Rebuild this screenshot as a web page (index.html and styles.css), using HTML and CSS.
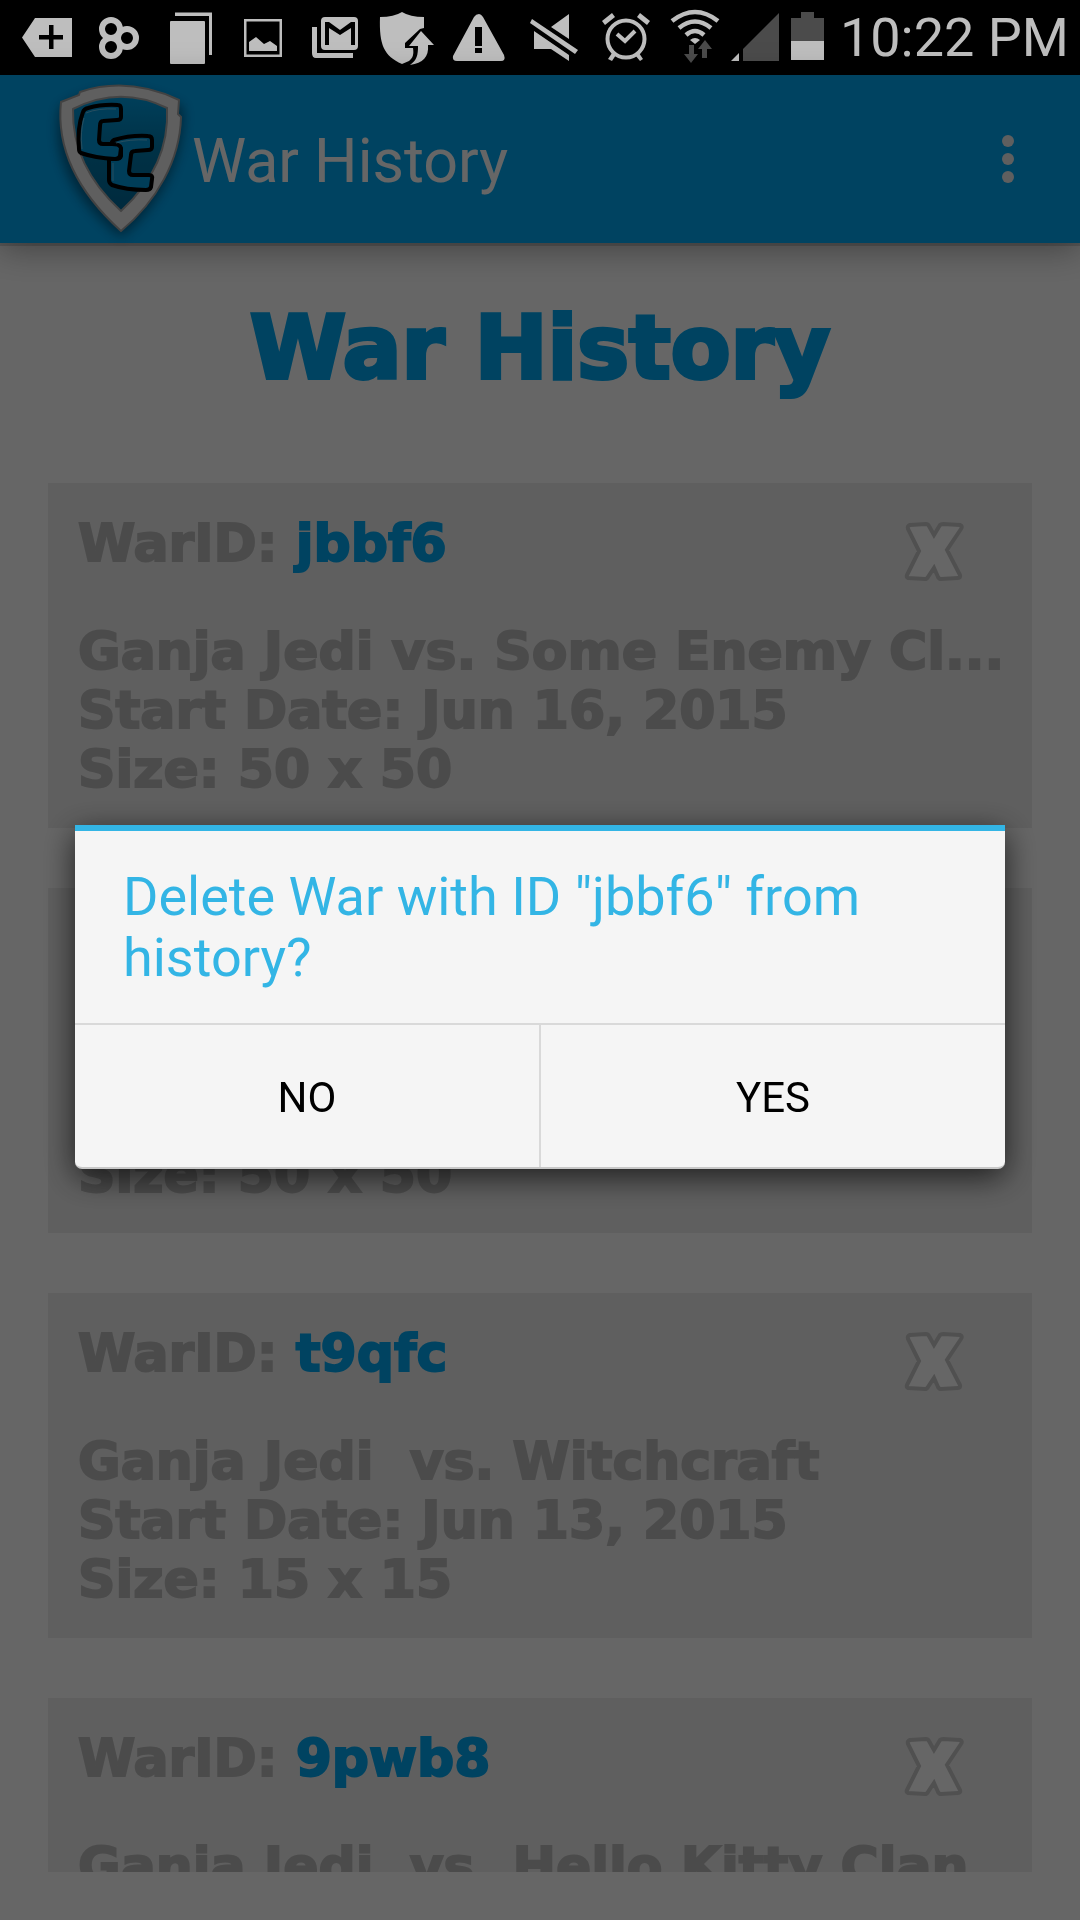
FILE: index.html
```html
<!DOCTYPE html>
<html lang="en">
<head>
<meta charset="utf-8">
<meta name="viewport" content="width=device-width, initial-scale=1">
<title>War History</title>
<link rel="stylesheet" href="styles.css">
</head>
<body>
<div class="statusbar">
  <svg class="status-icons" width="834" height="75" viewBox="0 0 834 75" aria-hidden="true">
    <g fill="#bebebe">
      <path fill-rule="evenodd" d="M22 37.500 35 18H72V57H35ZM49 25V35H39V39.500H49V49H53.500V39.500H63V35H53.500V25Z"/>
      <g fill="none" stroke="#bebebe" stroke-width="6"><circle cx="111" cy="29" r="9"/><circle cx="127" cy="38" r="9"/><circle cx="111" cy="47" r="9"/></g>
      <rect x="170" y="21" width="35" height="43" rx="1"/><path d="M175 12.500H212V55H209V16H175Z"/>
      <path fill-rule="evenodd" d="M244 19H282V57H244ZM246.500 21.500V54.500H279.500V21.500Z"/><path d="M249 51V42L256 37 264 44 270 41 277 46V51Z"/>
      <path fill-rule="evenodd" d="M325 17H354Q358 17 358 21V46Q358 50 354 50H325Q321 50 321 46V21Q321 17 325 17ZM325 22V45H329V28L340 35 351 28V45H355V22H351L340 30 329 22Z"/>
      <path d="M312 27H317V53H353V58H316Q312 58 312 53Z"/>
      <path d="M402 12Q410 17 424 17V28L420 29 405 43V48H413C414 54 413 58 409 61L402 64C384 56 379 45 380 17Q394 17 402 12Z"/>
      <path d="M421 31 434 45H428C429 57 423 63 410 65C417 60 418 55 418 46H409Z"/>
      <path fill-rule="evenodd" d="M479 14Q481 14 483 17L504 55Q506 61 501 61H457Q452 61 453 56L474 17Q476 14 479 14ZM475 27V46H482V27ZM475 48V53H482V48Z"/>
      <path d="M569 14V39L551 27ZM534 31 569 55V61L551 49H534Z"/><path d="M532 19 578 50 575 54 530 23Z"/>
      <circle cx="626" cy="39" r="18.500" fill="none" stroke="#bebebe" stroke-width="4"/>
      <path d="M602 21 612 13 615 17 605 25ZM650 21 640 13 637 17 647 25ZM612 53 608 59 612 61 616 55ZM639 53 643 59 640 61 635 55Z"/>
      <path d="M617 34 625 41 635 31" fill="none" stroke="#bebebe" stroke-width="4"/>
      <g fill="none" stroke="#bebebe" stroke-width="4.500"><path d="M672 21Q695 3 718 21"/><path d="M679 28Q695 15 711 28"/><path d="M686 35Q695 27 704 35"/></g><path d="M690 40Q695 36 700 40L695 44Z"/>
      <path d="M731 61 739 53V61Z"/><rect x="791" y="41" width="33" height="19"/>
    </g>
    <g fill="#4b4b4b"><path d="M689 45H694V54H698L691 63 684 54H689ZM702 58H707V49H712L705 40 698 49H702Z"/><path d="M743 61V49L779 13V61Z"/><path d="M801 12H814V18H824V41H791V18H801Z"/></g>
  </svg>
  <time class="clock">10:22 PM</time>
</div>

<header class="appbar">
  <svg class="logo" width="130" height="168" viewBox="0 0 130 168" aria-hidden="true">
    <defs>
      <linearGradient id="inner" x1="0" y1="0" x2="0" y2="1"><stop offset="0" stop-color="#009ee2"/><stop offset=".45" stop-color="#007caf"/><stop offset="1" stop-color="#00699a"/></linearGradient>
      <filter id="soft" x="-30%" y="-30%" width="160%" height="160%"><feGaussianBlur stdDeviation="6"/></filter>
    </defs>
    <path d="M8 32Q65-2 131 32C134 72 116 124 69 162 20 124-2 80 8 32Z" fill="#00283c" opacity=".55" filter="url(#soft)"/>
    <path d="M9 27 27 20 28 17Q76 1 127 25L126 39 129 42C128 85 105 126 69 156 26 117 4 75 9 27Z" fill="#eee" stroke="#a6a6a6" stroke-width="2"/>
    <path d="M21 34Q68 10 115 33C117 70 104 104 69 136 35 105 20 72 21 34Z" fill="url(#inner)" stroke="#aaa" stroke-width="2"/>
    <g fill="#0098dc" stroke="#000" stroke-width="4" stroke-linejoin="round">
      <path d="M36 33Q50 29 66 30 69 30 69 34V42Q69 45 65 45L51 46Q48 46 48 51L47 65Q47 69 51 69H66Q69 70 69 73L68 81Q67 84 63 84 43 83 29 78 27 77 27 74 25 53 31 37 32 34 36 33Z"/>
      <path d="M62 65Q78 60 96 61 100 61 100 65V72Q100 75 96 75L83 76Q79 76 79 80L77 96Q77 100 81 100H97Q101 100 100 104L99 112Q98 115 94 115 74 115 60 110 57 108 57 105V84H64Q68 84 69 81V73Q68 69 60 69 59 67 62 65Z"/>
    </g>
    <path d="M34 38Q46 33 64 34M32 43Q28 57 30 74M64 68Q78 64 95 65M61 88V106" fill="none" stroke="#8cd4f5" stroke-width="1" opacity=".7"/>
  </svg>
  <span class="app-title">War History</span>
  <button class="overflow" aria-label="More options"><svg width="16" height="48" viewBox="0 0 16 48" fill="#eee"><circle cx="8" cy="6" r="6"/><circle cx="8" cy="24" r="6"/><circle cx="8" cy="42" r="6"/></svg></button>
</header>

<main class="content">
  <h1 class="heading">War History</h1>
  <div class="wars">
    <article class="war">
      <div class="war-head"><h2 class="war-id">WarID: <a href="#jbbf6">jbbf6</a></h2>
        <button class="delete" aria-label="Delete jbbf6"><svg width="62" height="62" viewBox="0 0 62 62"><path class="cross" d="M6 5 22 4Q24 4 25 6L30 15 36 5Q37 4 39 4L56 5Q59 6 57 9L43 30 56 55Q57 58 54 58L37 59Q35 59 34 57L30 48 24 57Q23 59 21 59L4 58Q2 57 3 55L15 31 4 9Q3 6 6 5Z"/></svg></button></div>
      <p class="war-info">Ganja Jedi vs. Some Enemy Cl...<br>Start Date: Jun 16, 2015<br>Size: 50 x 50</p>
    </article>
    <article class="war">
      <div class="war-head"></div>
      <p class="war-info"><br><br>Size: 50 x 50</p>
    </article>
    <article class="war">
      <div class="war-head"><h2 class="war-id">WarID: <a href="#t9qfc">t9qfc</a></h2>
        <button class="delete" aria-label="Delete t9qfc"><svg width="62" height="62" viewBox="0 0 62 62"><path class="cross" d="M6 5 22 4Q24 4 25 6L30 15 36 5Q37 4 39 4L56 5Q59 6 57 9L43 30 56 55Q57 58 54 58L37 59Q35 59 34 57L30 48 24 57Q23 59 21 59L4 58Q2 57 3 55L15 31 4 9Q3 6 6 5Z"/></svg></button></div>
      <p class="war-info">Ganja Jedi &nbsp;vs. Witchcraft<br>Start Date: Jun 13, 2015<br>Size: 15 x 15</p>
    </article>
    <article class="war">
      <div class="war-head"><h2 class="war-id">WarID: <a href="#9pwb8">9pwb8</a></h2>
        <button class="delete" aria-label="Delete 9pwb8"><svg width="62" height="62" viewBox="0 0 62 62"><path class="cross" d="M6 5 22 4Q24 4 25 6L30 15 36 5Q37 4 39 4L56 5Q59 6 57 9L43 30 56 55Q57 58 54 58L37 59Q35 59 34 57L30 48 24 57Q23 59 21 59L4 58Q2 57 3 55L15 31 4 9Q3 6 6 5Z"/></svg></button></div>
      <p class="war-info">Ganja Jedi &nbsp;vs. Hello Kitty Clan</p>
    </article>
  </div>
</main>

<div class="scrim">
  <section class="dialog" role="alertdialog" aria-modal="true" aria-labelledby="dialog-title">
    <h2 class="dialog-title" id="dialog-title">Delete War with ID "jbbf6" from history?</h2>
    <div class="dialog-actions"><button class="action">NO</button><button class="action">YES</button></div>
  </section>
</div>
</body>
</html>
```

FILE: styles.css
```css
* { box-sizing: border-box; }
body {
  margin: 0;
  height: 100vh;
  display: flex;
  flex-direction: column;
  overflow: hidden;
  background: #fff;
  font-family: Roboto, "Liberation Sans", sans-serif;
}
button { border: 0; padding: 0; background: none; font: inherit; color: inherit; }
svg { display: block; flex: none; }

.statusbar {
  flex: none;
  display: flex;
  align-items: center;
  justify-content: space-between;
  height: 75px;
  padding-right: 11px;
  background: #000;
  color: #bebebe;
}
.clock { font-size: 54px; line-height: 74px; white-space: nowrap; }

.appbar {
  flex: none;
  position: relative;
  display: flex;
  align-items: center;
  height: 168px;
  padding: 0 64px 0 52px;
  background: #00a8f3;
  color: #fff;
  box-shadow: 0 3px 0 rgba(0, 0, 0, .14), 0 6px 32px rgba(0, 0, 0, .36);
}
.logo { overflow: visible; }
.app-title { flex: 1; padding: 4px 0 0 10px; font-size: 61px; line-height: 72px; }

.content {
  flex: 1;
  min-height: 0;
  display: flex;
  flex-direction: column;
  padding: 53px 48px 48px;
  font-family: "DejaVu Sans", sans-serif;
  font-weight: bold;
}
.heading {
  flex: none;
  margin: 0 0 83px;
  color: #00a8f3;
  font-size: 87px;
  line-height: 104px;
  text-align: center;
  -webkit-text-stroke: 4px #00a8f3;
}
.wars { flex: 1; min-height: 0; overflow: hidden; }
.war {
  height: 345px;
  margin-bottom: 60px;
  padding: 31px 30px 0;
  background: #eee;
  color: #bcbcbc;
  font-size: 52px;
  line-height: 59px;
  white-space: nowrap;
  -webkit-text-stroke: 2px;
}
.war-head { display: flex; justify-content: space-between; height: 108px; padding-right: 36px; }
.war-id { margin: 0; font-size: 52px; }
.war-id a { color: #00a8f3; text-decoration: none; }
.delete { align-self: flex-start; padding-top: 6px; }
.cross { fill: #fff; stroke: #c8c8c8; stroke-width: 4; }
.war-info { margin: 0; }

.scrim {
  position: fixed;
  inset: 75px 0 0;
  display: flex;
  align-items: center;
  padding: 0 75px 2px;
  background: rgba(0, 0, 0, .6);
}
.dialog {
  flex: 1;
  border-top: 6px solid #33b5e5;
  border-bottom: 2px solid #c8c8c8;
  border-radius: 0 0 7px 7px;
  background: #f5f5f5;
  box-shadow: 0 8px 32px rgba(0, 0, 0, .7);
}
.dialog-title {
  margin: 0;
  padding: 35px 48px;
  color: #33b5e5;
  font-size: 54px;
  font-weight: normal;
  line-height: 61px;
}
.dialog-actions { display: flex; border-top: 2px solid #d9d9d9; }
.action { flex: 1; height: 142px; padding-top: 4px; font-size: 42px; line-height: 48px; color: #000; }
.action + .action { border-left: 2px solid #d9d9d9; }
```
